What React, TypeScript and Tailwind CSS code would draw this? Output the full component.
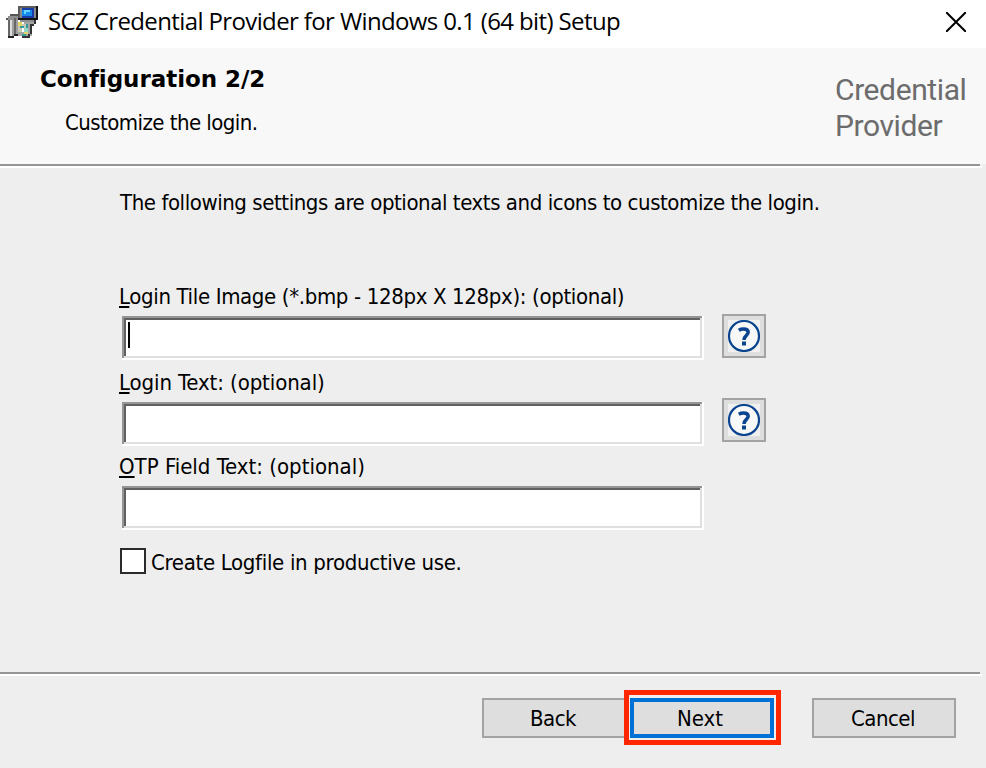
import React from "react";

function SetupIcon() {
  return (
    <svg width="32" height="32" viewBox="0 0 16 16" shapeRendering="crispEdges">
      <path fill="#8c8c8c" d="M6 0h9v7H6z" />
      <path fill="#161616" d="M15 0h1v7h-1zM6 6h10v1H6z" />
      <path fill="#5c5c5c" d="M6 0h9v1H6zM6 0h1v6H6z" />
      <path fill="#1b3da8" d="M8 1h6v5H8z" />
      <path fill="#1688e8" d="M8 2h5v3H8z" />
      <path fill="#62d4ff" d="M9 2h3v1H9zM9 3h1v1H9z" />
      <path fill="#555" d="M2 4h4v1H2zM0 6h1v1H0z" />
      <path fill="#8f8f8f" d="M1 5h5v2H1zM7 7h8v2H7z" />
      <path fill="#9e9e9e" d="M1 7h5v8H1z" />
      <path fill="#666" d="M1 7h1v8H1zM4 6h1v8H4z" />
      <path fill="#dcdcdc" d="M2 7h1v8H2z" />
      <path fill="#222" d="M1 15h3v1H1zM4 14h2v1H4z" />
      <path fill="#a4a4a4" d="M6 8h9v1H6zM6 9h7v6H6z" />
      <path fill="#333" d="M15 7v2h-1v1h-1v4h-1v2H8v-1h3v-1h1V9h2V7z" />
      <path fill="#c8c8b8" d="M6 9h5v4H6z" />
      <path fill="#e3d46a" d="M6 8h2v2H6zM9 13h2v1H9z" />
      <path fill="#309c98" d="M7 10h2v1H7zM8 14h2v1H8zM10 9h1v2h-1z" />
      <path fill="#8fd8c8" d="M9 11h2v2H9z" />
      <path fill="#fff" d="M8 11h1v2H8zM8 8h1v1H8z" />
    </svg>
  );
}

function HelpButton() {
  return (
    <button className="flex h-11 w-11 items-center justify-center border-2 border-[#a3a3a3] bg-[#dedede]">
      <svg width="32" height="32" viewBox="0 0 32 32" className="bg-[#f0f0f0]">
        <circle cx="16" cy="16" r="15" fill="#f8f8f8" stroke="#0b4590" strokeWidth="2.2" />
        <path d="M10.8 10.2c1.4-.8 3-1.200 4.700-1.200 3 0 4.700 1.200 4.700 3.300 0 3.200-4.200 3-4.200 7.700" fill="none" stroke="#0b4590" strokeWidth="3.5" />
        <path d="M14 21.500h4v4h-4z" fill="#0b4590" />
      </svg>
    </button>
  );
}

function TextField({ focused = false }: { focused?: boolean }) {
  return (
    <div className="ml-0.5 h-11 w-[582px] bg-white pt-1.5 pl-1.5 shadow-[inset_-2px_-2px_0_#fff,inset_2px_2px_0_#959595,inset_-4px_-4px_0_#dfdfdf,inset_4px_4px_0_#606060]">
      {focused && <div className="h-[26px] w-0.5 bg-black" />}
    </div>
  );
}

function Divider() {
  return (
    <div className="h-1 shrink-0 bg-[#eee]">
      <div className="h-0.5 w-[980px] bg-[#959595]" />
      <div className="h-0.5 w-[982px] bg-white" />
    </div>
  );
}

const buttonClass =
  "flex h-10 w-36 items-center justify-center border-2 border-[#a3a3a3] bg-[#dedede] pt-px pr-0.5";

export default function App() {
  return (
    <div className="flex h-[768px] w-[986px] flex-col overflow-hidden bg-[#eee] font-['DejaVu_Sans_Condensed','DejaVu_Sans',sans-serif] text-[22px] whitespace-nowrap text-black [font-stretch:condensed]">
      <header className="flex h-12 shrink-0 items-start bg-white pt-1.5 pl-1.5">
        <SetupIcon />
        <h1 className="ml-2.5 font-['Open_Sans',sans-serif] text-[24px] leading-[30px] tracking-[-0.62px] [font-stretch:normal]">
          SCZ Credential Provider for Windows 0.1 (64 bit) Setup
        </h1>
        <svg className="mt-1.5 mr-5 ml-auto" width="20" height="20" viewBox="0 0 20 20">
          <path d="M0 0L20 20M20 0L0 20" stroke="#000" strokeWidth="2" />
        </svg>
      </header>

      <section className="flex h-[116px] shrink-0 justify-between bg-[#f8f8f8]">
        <div className="pt-4 pl-10">
          <h2 className="font-['DejaVu_Sans',sans-serif] text-[23px] leading-[30px] font-bold tracking-[-0.05px] [font-stretch:normal]">
            Configuration 2/2
          </h2>
          <p className="mt-[13px] ml-[25px] leading-8 tracking-[-0.55px]">Customize the login.</p>
        </div>
        <div className="w-[151px] pt-6 font-[Roboto,sans-serif] text-[30px] leading-9 tracking-[-0.4px] text-[#6c6c6c] [font-stretch:normal]">
          <p>Credential</p>
          <p>Provider</p>
        </div>
      </section>
      <Divider />

      <main className="flex h-[504px] shrink-0 flex-col pl-[120px] tracking-[-0.5px]">
        <p className="mt-[19px] leading-8 tracking-[-0.43px]">
          The following settings are optional texts and icons to customize the login.
        </p>
        <div className="mt-[62px] flex h-[86px]">
          <div className="w-[602px]">
            <p className="mb-[3px] -ml-px leading-8 tracking-[-0.35px]">
              <u className="decoration-2 underline-offset-2">L</u>ogin Tile Image (*.bmp - 128px X 128px): (optional)
            </p>
            <TextField focused />
          </div>
          <div className="pt-[33px]"><HelpButton /></div>
        </div>
        <div className="flex h-[84px]">
          <div className="w-[602px]">
            <p className="mb-[3px] -ml-px leading-8 tracking-[-0.1px]">
              <u className="decoration-2 underline-offset-2">L</u>ogin Text: (optional)
            </p>
            <TextField />
          </div>
          <div className="pt-[31px]"><HelpButton /></div>
        </div>
        <div>
          <p className="mb-[3px] -ml-px leading-8 tracking-[0px]">
            <u className="decoration-2 underline-offset-2">O</u>TP Field Text: (optional)
          </p>
          <TextField />
        </div>
        <label className="mt-4 flex h-[30px] items-center tracking-[-0.32px]">
          <span className="mr-[5px] h-[26px] w-[26px] border-2 border-[#2b2b2b] bg-white" />
          <span className="pt-0.5">Create Logfile in productive use.</span>
        </label>
      </main>
      <Divider />

      <footer className="flex h-[92px] items-start pl-[482px] tracking-[-0.5px]">
        <div className="mt-[22px] w-[142px] overflow-hidden">
          <button className={buttonClass}>Back</button>
        </div>
        <div className="mt-[14px] h-[55px] w-[157px] border-[5px] border-[#ff2600] bg-[#eee] pt-[3px] pl-px">
          <button className="flex h-10 w-[144px] items-center justify-center border-4 border-[#0071d4] bg-[#dedede] pt-px pr-1 tracking-normal">
            Next
          </button>
        </div>
        <button className={buttonClass + " mt-[22px] ml-[31px]"}>Cancel</button>
      </footer>
    </div>
  );
}
